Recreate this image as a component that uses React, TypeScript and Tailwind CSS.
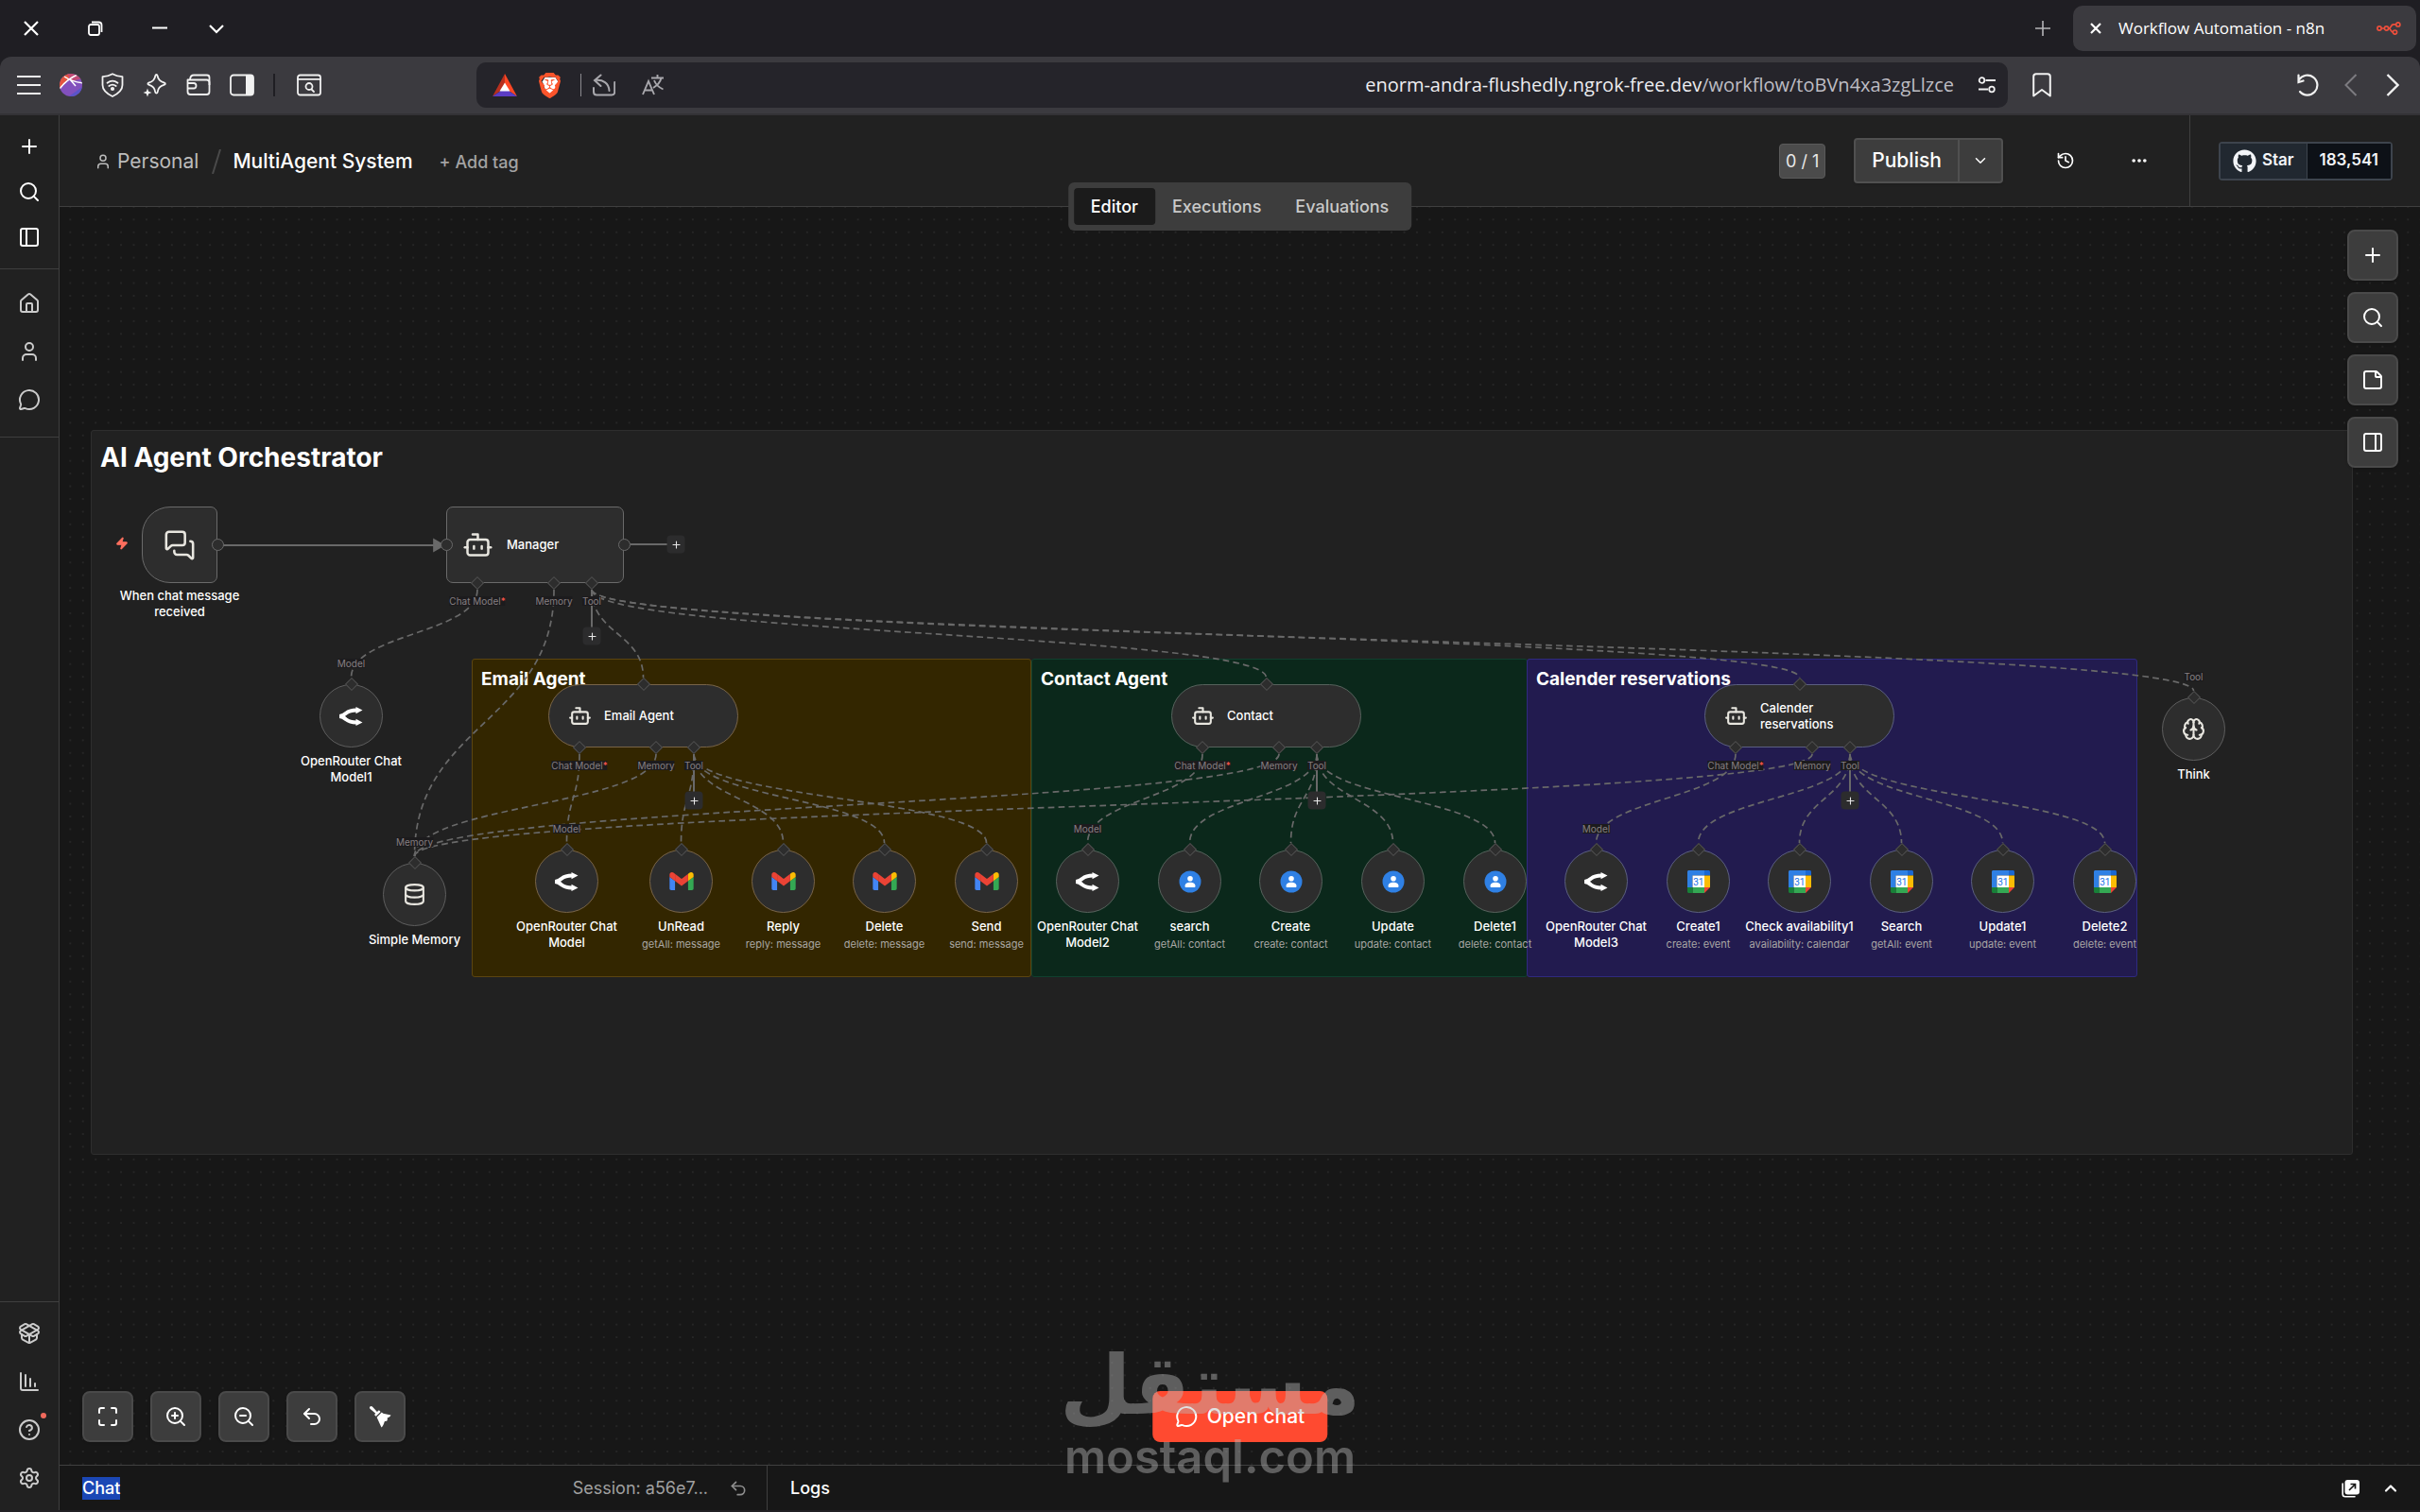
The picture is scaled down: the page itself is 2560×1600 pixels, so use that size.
import type { ReactNode } from "react";
import clsx from "clsx";
import {
    Bot,
    Brain,
    ChartColumnDecreasing,
    ChevronDown,
    ChevronUp,
    CircleQuestionMark,
    Database,
    Ellipsis,
    History,
    House,
    Maximize,
    MessageCircle,
    MessagesSquare,
    PackageOpen,
    PanelLeft,
    PanelRight,
    Plus,
    Search,
    Settings,
    StickyNote,
    Undo2,
    User,
    Zap,
    ZoomIn,
    ZoomOut,
} from "lucide-react";
import { FaGithub } from "react-icons/fa";
import { SiBrave } from "react-icons/si";

/* ---------- workflow data, in canvas pixels ---------- */

type Glyph = "openrouter" | "gmail" | "contacts" | "calendar" | "memory" | "think";

interface SubNode {
    id: string;
    x: number;
    y: number;
    name: string;
    glyph: Glyph;
    detail?: string;
    port?: string;
    tone?: Tone;
}

type Tone = "plain" | "yellow" | "green" | "blue";

const ROW = 680;
const R = 33.5;

const subNodes: SubNode[] = [
    { id: "or1", x: 275, y: 505, name: "OpenRouter Chat Model1", glyph: "openrouter", port: "Model" },
    { id: "mem", x: 342, y: 694, name: "Simple Memory", glyph: "memory", port: "Memory" },
    { id: "or", x: 503, y: ROW, name: "OpenRouter Chat Model", glyph: "openrouter", port: "Model", tone: "yellow" },
    { id: "unread", x: 624, y: ROW, name: "UnRead", detail: "getAll: message", glyph: "gmail", tone: "yellow" },
    { id: "reply", x: 732, y: ROW, name: "Reply", detail: "reply: message", glyph: "gmail", tone: "yellow" },
    { id: "delete", x: 839, y: ROW, name: "Delete", detail: "delete: message", glyph: "gmail", tone: "yellow" },
    { id: "send", x: 947, y: ROW, name: "Send", detail: "send: message", glyph: "gmail", tone: "yellow" },
    { id: "or2", x: 1054, y: ROW, name: "OpenRouter Chat Model2", glyph: "openrouter", port: "Model", tone: "green" },
    { id: "csearch", x: 1162, y: ROW, name: "search", detail: "getAll: contact", glyph: "contacts", tone: "green" },
    { id: "ccreate", x: 1269, y: ROW, name: "Create", detail: "create: contact", glyph: "contacts", tone: "green" },
    { id: "cupdate", x: 1377, y: ROW, name: "Update", detail: "update: contact", glyph: "contacts", tone: "green" },
    { id: "cdelete", x: 1485, y: ROW, name: "Delete1", detail: "delete: contact", glyph: "contacts", tone: "green" },
    { id: "or3", x: 1592, y: ROW, name: "OpenRouter Chat Model3", glyph: "openrouter", port: "Model", tone: "blue" },
    { id: "create1", x: 1700, y: ROW, name: "Create1", detail: "create: event", glyph: "calendar", tone: "blue" },
    { id: "check", x: 1807, y: ROW, name: "Check availability1", detail: "availability: calendar", glyph: "calendar", tone: "blue" },
    { id: "esearch", x: 1915, y: ROW, name: "Search", detail: "getAll: event", glyph: "calendar", tone: "blue" },
    { id: "update1", x: 2022, y: ROW, name: "Update1", detail: "update: event", glyph: "calendar", tone: "blue" },
    { id: "delete2", x: 2130, y: ROW, name: "Delete2", detail: "delete: event", glyph: "calendar", tone: "blue" },
    { id: "think", x: 2224, y: 519, name: "Think", glyph: "think", port: "Tool" },
];

const agents: { id: string; x: number; name: string; tone: Tone }[] = [
    { id: "email", x: 517, name: "Email Agent", tone: "yellow" },
    { id: "contact", x: 1176, name: "Contact", tone: "green" },
    { id: "cal", x: 1740, name: "Calender reservations", tone: "blue" },
];

const PORT = { model: 33, memory: 114, tool: 154 };
const ports = [
    { key: "model", x: PORT.model, label: "Chat Model", required: true },
    { key: "memory", x: PORT.memory, label: "Memory", required: false },
    { key: "tool", x: PORT.tool, label: "Tool", required: false },
];

const links: [string, keyof typeof PORT, string][] = [
    ["manager", "model", "or1"],
    ["manager", "memory", "mem"],
    ["manager", "tool", "email"],
    ["manager", "tool", "contact"],
    ["manager", "tool", "cal"],
    ["manager", "tool", "think"],
    ["email", "model", "or"],
    ["email", "memory", "mem"],
    ["email", "tool", "unread"],
    ["email", "tool", "reply"],
    ["email", "tool", "delete"],
    ["email", "tool", "send"],
    ["contact", "model", "or2"],
    ["contact", "memory", "mem"],
    ["contact", "tool", "csearch"],
    ["contact", "tool", "ccreate"],
    ["contact", "tool", "cupdate"],
    ["contact", "tool", "cdelete"],
    ["cal", "model", "or3"],
    ["cal", "memory", "mem"],
    ["cal", "tool", "create1"],
    ["cal", "tool", "check"],
    ["cal", "tool", "esearch"],
    ["cal", "tool", "update1"],
    ["cal", "tool", "delete2"],
];

const AGENT_TOP = 505;
const AGENT_BOTTOM = 572;
const MANAGER = { x: 409, y: 317, bottom: 398 };

function linkPath([from, port, to]: (typeof links)[number]) {
    const agent = agents.find((a) => a.id === from);
    const sx = (agent ? agent.x : MANAGER.x) + PORT[port];
    const sy = (agent ? AGENT_BOTTOM : MANAGER.bottom) + 7;
    const targetAgent = agents.find((a) => a.id === to);
    const sub = subNodes.find((n) => n.id === to);
    const tx = targetAgent ? targetAgent.x + 100.5 : sub!.x + R;
    const ty = (targetAgent ? AGENT_TOP : sub!.y) - 7;
    const my = (sy + ty) / 2;
    return `M${sx} ${sy}C${sx} ${my} ${tx} ${my} ${tx} ${ty}`;
}

const borders: Record<Tone, string> = {
    plain: "border-[#5e5e5e]",
    yellow: "border-[#786448]",
    green: "border-[#56625c]",
    blue: "border-[#5b5f80]",
};

/* ---------- drawn icons ---------- */

function OpenRouterIcon() {
    return (
        <svg viewBox="0 0 25 20" className="h-5 w-[25px]" fill="none" stroke="#fff" strokeWidth="4">
            <path d="M0 10c3 0 5-1.500 7-3.200C10 4.400 12.500 3.600 18 3.600" />
            <path d="M0 10c3 0 5 1.500 7 3.200 3 2.400 5.500 3.200 11 3.200" />
            <path d="M17.500 0v7.200L24.500 3.600zM17.500 12.800V20l7-3.600z" fill="#fff" stroke="none" />
        </svg>
    );
}

function GmailIcon() {
    return (
        <svg viewBox="52 42 88 66" className="h-[19px] w-[26px]">
            <path fill="#4285f4" d="M58 108h14V74L52 59v43c0 3.320 2.690 6 6 6" />
            <path fill="#34a853" d="M120 108h14c3.320 0 6-2.690 6-6V59l-20 15" />
            <path fill="#fbbc04" d="M120 48v26l20-15v-8c0-7.420-8.470-11.650-14.400-7.200" />
            <path fill="#ea4335" d="M72 74V48l24 18 24-18v26L96 92" />
            <path fill="#ea4335" d="M52 51v8l20 15V48l-5.600-4.200c-5.940-4.450-14.400-.220-14.400 7.200" />
        </svg>
    );
}

function ContactsIcon() {
    return (
        <svg viewBox="0 0 24 24" className="size-6">
            <circle cx="12" cy="12" r="11.500" fill="#2f80e4" />
            <circle cx="12" cy="8.800" r="2.800" fill="#fff" />
            <path d="M6.500 16.800c0-2.600 2.300-4 5.500-4s5.500 1.400 5.500 4c0 .8-.4 1.200-1.200 1.200H7.700c-.8 0-1.200-.4-1.200-1.200z" fill="#fff" />
        </svg>
    );
}

function CalendarIcon() {
    return (
        <svg viewBox="0 0 24 24" className="size-6">
            <path d="M1.500 0H18v5.500H5.500V18H0V1.500C0 .7.700 0 1.500 0z" fill="#2f80e4" />
            <path d="M18 0h4.500c.8 0 1.500.7 1.500 1.500v4h-6z" fill="#1967d2" />
            <path d="M18 5.500h6V18h-6z" fill="#fbbc04" />
            <path d="M5.500 18H18v6H5.500z" fill="#34a853" />
            <path d="M0 18h5.500v6h-4C.7 24 0 23.300 0 22.500z" fill="#188038" />
            <path d="M18 18h6l-6 6z" fill="#ea4335" />
            <path d="M5.500 5.500H18V18H5.500z" fill="#fff" />
            <text x="11.750" y="15.500" textAnchor="middle" fontSize="10" fontFamily="Roboto, sans-serif" fill="#1a73e8">
                31
            </text>
        </svg>
    );
}

function BroomIcon() {
    return (
        <svg viewBox="0 0 24 24" className="size-6" fill="#fff">
            <path d="M1.400 1.600c.8-.8 1.800-.8 2.500 0l5 5.400 2-1.700 1.700 1.700L7.700 11.700 6 10l1.300-1.300L1.400 3.700c-.6-.6-.6-1.500 0-2.100z" />
            <path d="M8.600 12.800l5.200-5.200 1.500 1.200 8.200 1.800c-1 1.800-2.300 2.500-3.800 2.800.4 1.300.2 2.300-.8 3.500-1.300-.3-1.900 0-2.300.8-.6 2.300-1.600 4.500-3.100 5.800z" />
        </svg>
    );
}

function PopOutIcon() {
    return (
        <svg viewBox="0 0 20 20" className="size-5">
            <path d="M1.200 5v11c0 1.600 1.200 2.800 2.800 2.800h10" fill="none" stroke="#fff" strokeWidth="1.600" strokeLinecap="round" />
            <rect x="3.500" y="1" width="15.500" height="15.500" rx="3" fill="#fff" />
            <path d="M8 12l6-6M9.500 5.500h5v5" fill="none" stroke="#171717" strokeWidth="1.700" />
        </svg>
    );
}

function ShieldIcon() {
    return (
        <svg viewBox="0 0 24 26" className="h-[26px] w-6" fill="none" stroke="#f1f1f1" strokeWidth="1.800" strokeLinecap="round" strokeLinejoin="round">
            <path d="M12 1.200c3 1.700 6 2.700 10.500 3V13c0 5.200-4.300 9-10.500 12C5.800 22 1.500 18.200 1.500 13V4.200C6 3.900 9 2.900 12 1.200z" />
            <path d="M6.500 10.800c3.300-2.600 7.700-2.600 11 0M8.300 14c2.300-1.700 5.100-1.700 7.400 0" />
            <circle cx="12" cy="17" r="1.200" fill="#f1f1f1" />
        </svg>
    );
}

function SparkleIcon() {
    return (
        <svg viewBox="0 0 26 26" className="size-[26px]" fill="none" stroke="#f1f1f1" strokeWidth="1.800" strokeLinejoin="round">
            <path d="M14.500 2c.6 0 .9.400 1.100 1.200.8 4 2.200 5.600 7.300 7.500 1.300.5 1.300 1.400 0 1.900-5.100 1.900-6.500 3.500-7.300 8-.2 1.300-2 1.300-2.300 0-.8-4.500-2.100-6.100-7-8-1.200-.5-1.200-1.400 0-1.900 4.900-1.900 6.200-3.500 7-7.500.2-.8.600-1.200 1.200-1.200z" />
            <path d="M5 16.500l1.200 3.300 3.300 1.200-3.300 1.200L5 25.500l-1.200-3.300L.5 21l3.300-1.200z" fill="#f1f1f1" stroke="none" />
        </svg>
    );
}

function WalletIcon() {
    return (
        <svg viewBox="0 0 26 24" className="h-6 w-[26px]" fill="none" stroke="#f1f1f1" strokeWidth="1.800" strokeLinejoin="round">
            <path d="M1.500 6.500h20c1.700 0 3 1.200 3 2.800V19c0 1.700-1.300 3-3 3H4.500c-1.700 0-3-1.300-3-3z" />
            <path d="M4 6c.3-3 1.500-4.500 4-4.500h14c1.600 0 2.500.8 2.500 2.500v8M1.500 10H8c1.500 0 2.500 1 2.500 2.700S9.500 15.500 8 15.500H1.500" />
        </svg>
    );
}

function SidebarIcon() {
    return (
        <svg viewBox="0 0 26 24" className="h-6 w-[26px]">
            <rect x="1" y="1.500" width="24" height="21" rx="3" fill="none" stroke="#f1f1f1" strokeWidth="1.800" />
            <path d="M17 1.500h5.500A2.500 2.500 0 0 1 25 4v16a2.500 2.500 0 0 1-2.500 2.500H17z" fill="#f1f1f1" />
        </svg>
    );
}

function TabSearchIcon() {
    return (
        <svg viewBox="0 0 26 24" className="h-6 w-[26px]" fill="none" stroke="#f1f1f1" strokeWidth="1.800" strokeLinecap="round">
            <rect x="1" y="1.500" width="24" height="21" rx="2.500" />
            <path d="M1 5.800h24M15.500 16.500l2.500 2.500" />
            <circle cx="13" cy="13.500" r="3.500" />
        </svg>
    );
}

function ProfileIcon() {
    return (
        <svg viewBox="0 0 24 24" className="size-6">
            <defs>
                <clipPath id="ball">
                    <circle cx="12" cy="12" r="12" />
                </clipPath>
            </defs>
            <g clipPath="url(#ball)">
                <path d="M0 0h24v24H0z" fill="#8250bd" />
                <path d="M0 16L14 0H0z" fill="#e2553f" />
                <path d="M8 0h16v5L13 8z" fill="#c14b76" />
                <path d="M24 14v10H10z" fill="#5a54c9" />
                <path d="M0 16C6 8 12 4 19 1M5 3c6 4 12 6 20 7M11 6l6 7" fill="none" stroke="#fff" strokeWidth="1.500" />
            </g>
        </svg>
    );
}

function BatIcon() {
    return (
        <svg viewBox="0 0 26 24" className="h-6 w-[26px]">
            <path d="M13 0L0 24l13-9z" fill="#b8301f" />
            <path d="M13 0l13 24-13-9z" fill="#ff4724" />
            <path d="M0 24h26l-9-6H9z" fill="#5b3cc4" />
            <path d="M13 9.500l5.500 9h-11z" fill="#fff" />
        </svg>
    );
}

function N8nIcon() {
    return (
        <svg viewBox="0 0 26 14" className="h-[14px] w-[26px]" fill="none" stroke="#ee4f3c" strokeWidth="1.700">
            <circle cx="3" cy="7" r="2.100" />
            <circle cx="10.500" cy="7" r="2.100" />
            <circle cx="22.800" cy="2.900" r="2.100" />
            <circle cx="19.500" cy="11.100" r="2.100" />
            <path d="M5.200 7h3M12.800 7c3.200 0 2-4.100 5-4.100h2.800M12.800 7c2.600 0 2.200 4.100 4.500 4.100" />
        </svg>
    );
}

/* ---------- small shared pieces ---------- */

function IconButton({ label, className, children }: { label: string; className?: string; children: ReactNode }) {
    return (
        <button aria-label={label} className={clsx("flex shrink-0 cursor-pointer items-center justify-center", className)}>
            {children}
        </button>
    );
}

function CanvasButton({ label, children }: { label: string; children: ReactNode }) {
    return (
        <button
            aria-label={label}
            className="flex size-[54px] cursor-pointer items-center justify-center rounded-lg border-2 border-[#4a4a4a] bg-[#3d3d3d] text-white shadow-sm"
        >
            {children}
        </button>
    );
}

function Diamond({ x, y }: { x: number; y: number }) {
    return (
        <span
            className="absolute size-[10px] -translate-1/2 rotate-45 border border-[#505050] bg-[#2d2d2d]"
            style={{ left: x, top: y }}
        />
    );
}

function PortLabel({ x, y, required, children }: { x: number; y: number; required?: boolean; children: ReactNode }) {
    return (
        <span
            className="absolute -translate-1/2 bg-[#1c1b1d] text-[10px] leading-[10px] whitespace-nowrap text-[#867f82]"
            style={{ left: x, top: y }}
        >
            {children}
            {required && <span className="text-[#ff5a4d]">*</span>}
        </span>
    );
}

function AddNodeButton({ x, y }: { x: number; y: number }) {
    return (
        <button
            aria-label="Add node"
            className="absolute flex size-[19px] -translate-1/2 items-center justify-center rounded bg-[#2c2c2d] text-[#e6e6e6]"
            style={{ left: x, top: y }}
        >
            <Plus size={12} strokeWidth={2.2} />
        </button>
    );
}

/* ---------- browser chrome ---------- */

function TabStrip() {
    return (
        <div className="flex h-[60px] items-center bg-[#1f1e23] pr-1 text-white">
            <div className="flex items-center gap-11 pl-[21px]">
                <IconButton label="Close window" className="size-6">
                    <svg viewBox="0 0 16 16" className="size-4" stroke="currentColor" strokeWidth="2.200">
                        <path d="M1 1l14 14M15 1L1 15" />
                    </svg>
                </IconButton>
                <IconButton label="Restore window" className="size-6">
                    <svg viewBox="0 0 16 16" className="size-4" fill="none" stroke="currentColor" strokeWidth="1.800">
                        <rect x="1" y="4" width="11" height="11" rx="2" />
                        <path d="M4 1.500h7.500c2 0 3 1 3 3V12" />
                    </svg>
                </IconButton>
                <IconButton label="Minimize window" className="size-6">
                    <svg viewBox="0 0 16 16" className="size-4" stroke="currentColor" strokeWidth="2">
                        <path d="M0 7.500h16" />
                    </svg>
                </IconButton>
                <IconButton label="Search tabs" className="-ml-1 h-6 w-4">
                    <svg viewBox="0 0 16 16" className="size-4" fill="none" stroke="currentColor" strokeWidth="2.200">
                        <path d="M1 5l7 7 7-7" />
                    </svg>
                </IconButton>
            </div>
            <div className="ml-auto flex items-center gap-5">
                <IconButton label="New tab" className="size-6 text-[#b5b5b8]">
                    <svg viewBox="0 0 16 16" className="size-4" stroke="currentColor" strokeWidth="1.600">
                        <path d="M8 0v16M0 8h16" />
                    </svg>
                </IconButton>
                <div className="flex h-12 w-[363px] items-center rounded-[10px] bg-[#3b3a3f] pr-4 pl-[18px]">
                    <IconButton label="Close tab" className="size-3">
                        <svg viewBox="0 0 12 12" className="size-3" stroke="currentColor" strokeWidth="2.200">
                            <path d="M1 1l10 10M11 1L1 11" />
                        </svg>
                    </IconButton>
                    <span className="ml-[18px] font-['Open_Sans',sans-serif] text-[17px]">Workflow Automation - n8n</span>
                    <span className="ml-auto">
                        <N8nIcon />
                    </span>
                </div>
            </div>
        </div>
    );
}

function AddressBar() {
    return (
        <div className="bg-[#1f1e23]">
            <div className="flex h-[62px] items-center rounded-t-xl border-b-2 border-[#333236] bg-[#3b3a3f] text-[#f1f1f1]">
                <div className="flex items-center gap-5 pl-[18px]">
                    <IconButton label="Menu">
                        <svg viewBox="0 0 25 22" className="h-[22px] w-[25px]" stroke="currentColor" strokeWidth="2">
                            <path d="M0 2h25M0 11h25M0 20h25" />
                        </svg>
                    </IconButton>
                    <IconButton label="Profile"><ProfileIcon /></IconButton>
                    <IconButton label="VPN"><ShieldIcon /></IconButton>
                    <IconButton label="Leo AI"><SparkleIcon /></IconButton>
                    <IconButton label="Wallet"><WalletIcon /></IconButton>
                    <IconButton label="Sidebar"><SidebarIcon /></IconButton>
                </div>
                <span className="ml-5 h-6 w-0.5 bg-[#1f1e23]" />
                <IconButton label="Search open tabs" className="ml-[23px]"><TabSearchIcon /></IconButton>
                <div className="ml-[164px] flex h-12 min-w-0 flex-1 items-center rounded-[10px] bg-[#25242a] pr-3 pl-[17px]">
                    <IconButton label="Rewards"><BatIcon /></IconButton>
                    <IconButton label="Brave Shields" className="relative ml-[21px]">
                        <svg viewBox="0 0 24 28" className="absolute h-[26px] w-[22px]">
                            <path d="M6 5h12l3 5-4 11-5 4-5-4L3 10z" fill="#fff" />
                        </svg>
                        <SiBrave size={27} className="relative text-[#fb542b]" />
                    </IconButton>
                    <span className="ml-[19px] h-6 w-px bg-[#8b8a8f]" />
                    <IconButton label="Share" className="ml-3 text-[#a9a8ad]">
                        <svg viewBox="0 0 24 24" className="size-6" fill="none" stroke="currentColor" strokeWidth="2" strokeLinecap="round">
                            <path d="M1 15v4c0 2 1.200 3.500 3.200 3.500h16c1.800 0 3-1.300 3-3V9M8.500 1.500L2 7l6.500 6M2.500 7C11 6 17 10 17.500 18" />
                        </svg>
                    </IconButton>
                    <IconButton label="Translate" className="ml-7 text-[#a9a8ad]">
                        <svg viewBox="0 0 24 24" className="size-6" fill="none" stroke="currentColor" strokeWidth="1.900">
                            <path d="M1 22L7 8l6 14M3 17.500h8M10 4.500h13M16.500 1v3.500M12 15c4-2.500 7.500-6 8.500-10.500M13 7c1.500 4 5 7.500 9.500 9.500" />
                        </svg>
                    </IconButton>
                    <a href="#url" className="ml-auto font-['Open_Sans',sans-serif] text-[20px] whitespace-nowrap text-[#ededf0]">
                        enorm-andra-flushedly.ngrok-free.dev<span className="text-[#bebdc4]">/workflow/toBVn4xa3zgLlzce</span>
                    </a>
                    <IconButton label="Site information" className="ml-[25px]">
                        <svg viewBox="0 0 20 20" className="size-5" fill="none" stroke="currentColor" strokeWidth="1.800">
                            <circle cx="4.500" cy="5" r="2.800" />
                            <circle cx="15" cy="14.500" r="2.800" />
                            <path d="M8.500 5H19M1 14.500h10" />
                        </svg>
                    </IconButton>
                </div>
                <IconButton label="Bookmark" className="ml-[26px]">
                    <svg viewBox="0 0 20 26" className="h-[26px] w-5" fill="none" stroke="currentColor" strokeWidth="2" strokeLinejoin="round">
                        <path d="M4 1.200h12c1.700 0 2.800 1 2.800 2.700V24.500L10 18l-8.800 6.500V3.900C1.200 2.200 2.300 1.200 4 1.200z" />
                    </svg>
                </IconButton>
                <div className="ml-[258px] flex items-center gap-[26px] pr-[22px]">
                    <IconButton label="Reload">
                        <svg viewBox="0 0 26 24" className="h-6 w-[26px]" fill="none" stroke="currentColor" strokeWidth="2.200" strokeLinecap="round">
                            <path d="M4 6.500A10.500 10.500 0 1 1 5 19M3.500 1.500V9l5-1.500" />
                        </svg>
                    </IconButton>
                    <IconButton label="Forward" className="text-[#7c7b80]">
                        <svg viewBox="0 0 14 24" className="h-6 w-[14px]" fill="none" stroke="currentColor" strokeWidth="2">
                            <path d="M12.500 1l-11 11 11 11" />
                        </svg>
                    </IconButton>
                    <IconButton label="Back">
                        <svg viewBox="0 0 14 24" className="ml-1 h-6 w-[14px]" fill="none" stroke="currentColor" strokeWidth="2.400">
                            <path d="M1.500 1l11 11-11 11" />
                        </svg>
                    </IconButton>
                </div>
            </div>
        </div>
    );
}

/* ---------- app shell ---------- */

function SideNav() {
    return (
        <nav className="flex w-[63px] shrink-0 flex-col border-r border-[#3f3f3f] bg-[#212121] text-[#cbcbcb]">
            <div className="flex flex-col items-center gap-6 border-b border-[#3f3f3f] pt-[21px] pb-[21px] text-white">
                <IconButton label="Create"><Plus size={24} /></IconButton>
                <IconButton label="Search"><Search size={24} /></IconButton>
                <IconButton label="Toggle sidebar"><PanelLeft size={24} /></IconButton>
            </div>
            <div className="flex flex-col items-center gap-[27px] border-b border-[#3f3f3f] pt-6 pb-[27px]">
                <IconButton label="Overview"><House size={24} /></IconButton>
                <IconButton label="Personal"><User size={24} /></IconButton>
                <IconButton label="Chat"><MessageCircle size={24} /></IconButton>
            </div>
            <div className="mt-auto flex flex-col items-center gap-[27px] border-t border-[#3f3f3f] pt-[21px] pb-[22px]">
                <IconButton label="Templates"><PackageOpen size={24} /></IconButton>
                <IconButton label="Insights"><ChartColumnDecreasing size={24} /></IconButton>
                <IconButton label="Help" className="relative">
                    <CircleQuestionMark size={24} />
                    <span className="absolute -top-[6px] -right-[6px] size-[6px] rounded-full bg-[#f0695c]" />
                </IconButton>
                <IconButton label="Settings"><Settings size={24} /></IconButton>
            </div>
        </nav>
    );
}

function WorkflowHeader() {
    return (
        <header className="relative z-10 flex h-[97px] shrink-0 items-center border-b border-[#3f3f3f] bg-[#212121]">
            <div className="flex items-center pt-0.5">
                <a href="#personal" className="ml-[37px] flex items-center gap-[6px] text-[21px] text-[#bcbcbc]">
                    <User size={18} />
                    Personal
                </a>
                <svg viewBox="0 0 10 26" className="ml-[14px] h-[26px] w-[10px]" stroke="#4a4a4a" strokeWidth="2">
                    <path d="M9 0L1 26" />
                </svg>
                <h1 className="ml-3 text-[21px] font-medium text-white">MultiAgent System</h1>
                <button className="ml-7 cursor-pointer text-[18px] font-medium text-[#a3a3a3]">+ Add tag</button>
            </div>
            <div className="ml-auto flex h-full items-center">
                <span className="rounded border border-[#5a5a5a] bg-[#4b4b4b] px-[6px] py-1 text-[18px] text-[#e8e8e8]">0 / 1</span>
                <div className="ml-[30px] flex h-12 items-stretch rounded border-2 border-[#505050] bg-[#3d3d3d] text-white shadow-sm">
                    <button className="cursor-pointer px-[17px] text-[21px] font-medium">Publish</button>
                    <button aria-label="Publish options" className="flex w-[46px] cursor-pointer items-center justify-center border-l-2 border-[#505050]">
                        <ChevronDown size={18} />
                    </button>
                </div>
                <IconButton label="Workflow history" className="ml-14 text-white"><History size={20} /></IconButton>
                <IconButton label="More" className="ml-[58px] text-white"><Ellipsis size={20} strokeWidth={2.4} /></IconButton>
                <div className="ml-[43px] flex h-full items-center border-l border-[#3f3f3f] pr-[29px] pl-[30px]">
                    <a href="#star" className="flex h-[41px] items-stretch rounded border-2 border-[#3d444d] text-[17px] font-semibold text-[#f3f5f8]">
                        <span className="flex items-center gap-[6px] bg-[#212830] px-[13px]">
                            <FaGithub size={25} />
                            Star
                        </span>
                        <span className="flex items-center border-l border-[#3d444d] bg-[#0d1117] px-[13px]">183,541</span>
                    </a>
                </div>
            </div>
            <div role="tablist" className="absolute -bottom-[26px] left-1/2 flex -translate-x-1/2 rounded-md bg-[#3d3d3d] p-[6px] text-[18px] font-medium text-[#c9c9c9]">
                <button role="tab" aria-selected="true" className="h-[39px] rounded bg-[#1b1b1b] px-[18px] text-white">Editor</button>
                <button role="tab" className="h-[39px] px-[18px]">Executions</button>
                <button role="tab" className="h-[39px] px-[18px]">Evaluations</button>
            </div>
        </header>
    );
}

function Sticky({ x, y, w, h, title, className }: { x: number; y: number; w: number; h: number; title: string; className: string }) {
    return (
        <section className={clsx("absolute rounded-[3px] border px-[9px] font-bold text-white", className)} style={{ left: x, top: y, width: w, height: h }}>
            <h2>{title}</h2>
        </section>
    );
}

function NodeGlyph({ glyph }: { glyph: Glyph }) {
    switch (glyph) {
        case "openrouter":
            return <OpenRouterIcon />;
        case "gmail":
            return <GmailIcon />;
        case "contacts":
            return <ContactsIcon />;
        case "calendar":
            return <CalendarIcon />;
        case "memory":
            return <Database size={25} className="text-[#e8e6df]" />;
        default:
            return <Brain size={25} className="text-[#e8e6df]" />;
    }
}

function SubNodeView({ node }: { node: SubNode }) {
    return (
        <div className="absolute w-[67px]" style={{ left: node.x, top: node.y }}>
            <div className={clsx("flex size-[67px] items-center justify-center rounded-full border bg-[#2d2d2d]", borders[node.tone ?? "plain"])}>
                <NodeGlyph glyph={node.glyph} />
            </div>
            <div className="-mx-[31px] mt-[6px] text-center">
                <p className="text-[13px] leading-[17px] font-medium text-white">{node.name}</p>
                {node.detail && <p className="mt-0.5 text-[11px] leading-[17px] whitespace-nowrap text-[#a9a6a4]">{node.detail}</p>}
            </div>
            <Diamond x={R} y={0} />
            {node.port && (
                <PortLabel x={R} y={-22}>
                    {node.port}
                </PortLabel>
            )}
        </div>
    );
}

function AgentPorts({ y }: { y: number }) {
    return (
        <>
            {ports.map((port) => (
                <Diamond key={port.key} x={port.x} y={y} />
            ))}
            {ports.map((port) => (
                <PortLabel key={port.key} x={port.x} y={y + 19} required={port.required}>
                    {port.label}
                </PortLabel>
            ))}
            <AddNodeButton x={PORT.tool} y={y + 56} />
        </>
    );
}

function AgentNode({ x, name, tone }: { x: number; name: string; tone: Tone }) {
    return (
        <div className="absolute" style={{ left: x, top: AGENT_TOP }}>
            <div className={clsx("flex h-[67px] w-[201px] items-center gap-[13px] rounded-full border bg-[#2d2d2d] px-5", borders[tone])}>
                <Bot size={25} className="shrink-0 text-[#e8e6df]" />
                <p className="w-[100px] text-[13px] leading-[17px] font-medium text-white">{name}</p>
            </div>
            <Diamond x={100.5} y={0} />
            <AgentPorts y={67} />
        </div>
    );
}

function Canvas() {
    return (
        <div className="relative min-h-0 flex-1 overflow-hidden bg-[#171717]">
            <svg className="absolute inset-0 size-full">
                <defs>
                    <pattern id="dots" x="4.600" y="6.600" width="13.440" height="13.440" patternUnits="userSpaceOnUse">
                        <circle cx="6.720" cy="6.720" r="0.700" fill="#3c3c3c" />
                    </pattern>
                </defs>
                <rect width="100%" height="100%" fill="url(#dots)" />
            </svg>

            <Sticky x={33} y={236} w={2393} h={767} title="AI Agent Orchestrator" className="border-[#2e2e2e] bg-[#212121] pt-[10px] text-[28px] leading-9" />
            <Sticky x={436} y={478} w={592} h={337} title="Email Agent" className="border-[#5c4510] bg-[#332600] pt-[9px] text-[19px] leading-6" />
            <Sticky x={1028} y={478} w={525} h={337} title="Contact Agent" className="border-[#10402e] bg-[#0b281b] pt-[9px] text-[19px] leading-6" />
            <Sticky x={1552} y={478} w={646} h={337} title="Calender reservations" className="border-[#2f2a80] bg-[#221b4f] pt-[9px] text-[19px] leading-6" />

            <svg className="absolute inset-0 size-full" fill="none" stroke="#696969" strokeWidth="1.700">
                {links.map((link) => (
                    <path key={link.join("-")} d={linkPath(link)} strokeDasharray="6.700 4.200" />
                ))}
                <path d="M173 358H398M604 357H644M563 405V445" strokeWidth="2" />
                <path d="M396 352l7 4v4l-7 4z" fill="#696969" />
                {agents.map((a) => (
                    <path key={a.id} d={`M${a.x + PORT.tool} 580V620`} strokeWidth="2" />
                ))}
            </svg>

            {/* chat trigger */}
            <div className="absolute w-20" style={{ left: 87, top: MANAGER.y }}>
                <Zap size={14} className="absolute top-[32px] -left-[28px] fill-[#ff6f5e] text-[#ff6f5e]" />
                <div className="flex h-[81px] items-center justify-center rounded-l-[30px] rounded-r-[7px] border border-[#6a6a6a] bg-[#2d2d2d]">
                    <MessagesSquare size={34} strokeWidth={1.8} className="text-[#e8e6df]" />
                </div>
                <p className="-mx-8 mt-[5px] text-center text-[13px] leading-[17px] font-medium text-white">When chat message received</p>
                <span className="absolute top-[34px] -right-[7px] size-[13px] rounded-full border border-[#6a6a6a] bg-[#2d2d2d]" />
            </div>

            {/* manager agent */}
            <div className="absolute" style={{ left: MANAGER.x, top: MANAGER.y }}>
                <div className="flex h-[81px] w-[188px] items-center gap-[14px] rounded-[7px] border border-[#6a6a6a] bg-[#2d2d2d] pl-4">
                    <Bot size={33} strokeWidth={1.8} className="text-[#e8e6df]" />
                    <p className="text-[13px] leading-[17px] font-medium text-white">Manager</p>
                </div>
                <span className="absolute top-[34px] -left-[6px] size-[13px] rounded-full border border-[#6a6a6a] bg-[#2d2d2d]" />
                <span className="absolute top-[34px] -right-[7px] size-[13px] rounded-full border border-[#6a6a6a] bg-[#2d2d2d]" />
                <AgentPorts y={81} />
                <AddNodeButton x={243} y={40} />
            </div>

            {agents.map((agent) => (
                <AgentNode key={agent.id} x={agent.x} name={agent.name} tone={agent.tone} />
            ))}
            {subNodes.map((node) => (
                <SubNodeView key={node.id} node={node} />
            ))}

            {/* floating controls */}
            <div className="absolute top-6 right-[23px] flex flex-col gap-3">
                <CanvasButton label="Add node"><Plus size={24} /></CanvasButton>
                <CanvasButton label="Search nodes"><Search size={24} /></CanvasButton>
                <CanvasButton label="Add sticky note"><StickyNote size={24} /></CanvasButton>
                <CanvasButton label="Open panel"><PanelRight size={24} /></CanvasButton>
            </div>
            <div className="absolute bottom-6 left-6 flex gap-[18px]">
                <CanvasButton label="Fit view"><Maximize size={24} /></CanvasButton>
                <CanvasButton label="Zoom in"><ZoomIn size={24} /></CanvasButton>
                <CanvasButton label="Zoom out"><ZoomOut size={24} /></CanvasButton>
                <CanvasButton label="Undo"><Undo2 size={24} /></CanvasButton>
                <CanvasButton label="Tidy up"><BroomIcon /></CanvasButton>
            </div>
            <button className="absolute bottom-6 left-1/2 flex h-[54px] -translate-x-1/2 cursor-pointer items-center gap-[10px] rounded-lg bg-[#ff4a30] px-6 text-[21px] font-medium whitespace-nowrap text-white">
                <MessageCircle size={24} />
                Open chat
            </button>
        </div>
    );
}

function LogBar() {
    return (
        <footer className="flex h-12 shrink-0 items-center border-t border-[#3f3f3f] bg-[#171717] text-[18px] font-medium text-white">
            <div className="flex h-full w-[749px] items-center border-r border-[#3f3f3f] pr-5 pl-6">
                <span className="bg-[#1b47b5] leading-6">Chat</span>
                <span className="ml-auto font-normal text-[#a0a0a0]">Session: a56e7...</span>
                <IconButton label="Reset session" className="ml-[22px] text-[#8f8f8f]"><Undo2 size={20} /></IconButton>
            </div>
            <span className="pl-6">Logs</span>
            <IconButton label="Pop out" className="ml-auto"><PopOutIcon /></IconButton>
            <IconButton label="Expand panel" className="mr-[21px] ml-[22px]"><ChevronUp size={20} strokeWidth={2.6} /></IconButton>
        </footer>
    );
}

function Watermark() {
    return (
        <div className="pointer-events-none absolute bottom-8 left-1/2 z-20 flex -translate-x-1/2 flex-col items-center whitespace-nowrap text-[#bcbcbc] opacity-43">
            <span lang="ar" dir="rtl" className="font-['DejaVu_Sans',sans-serif] text-[87px] leading-[100px] font-bold">
                مستقل
            </span>
            <span className="text-[49px] leading-[52px] font-semibold">mostaql.com</span>
        </div>
    );
}

export default function App() {
    return (
        <div className="relative flex h-screen flex-col overflow-hidden bg-[#212024] pb-0.5 font-['Inter',sans-serif]">
            <TabStrip />
            <AddressBar />
            <div className="flex min-h-0 flex-1">
                <SideNav />
                <main className="flex min-w-0 flex-1 flex-col">
                    <WorkflowHeader />
                    <Canvas />
                    <LogBar />
                </main>
            </div>
            <Watermark />
        </div>
    );
}
